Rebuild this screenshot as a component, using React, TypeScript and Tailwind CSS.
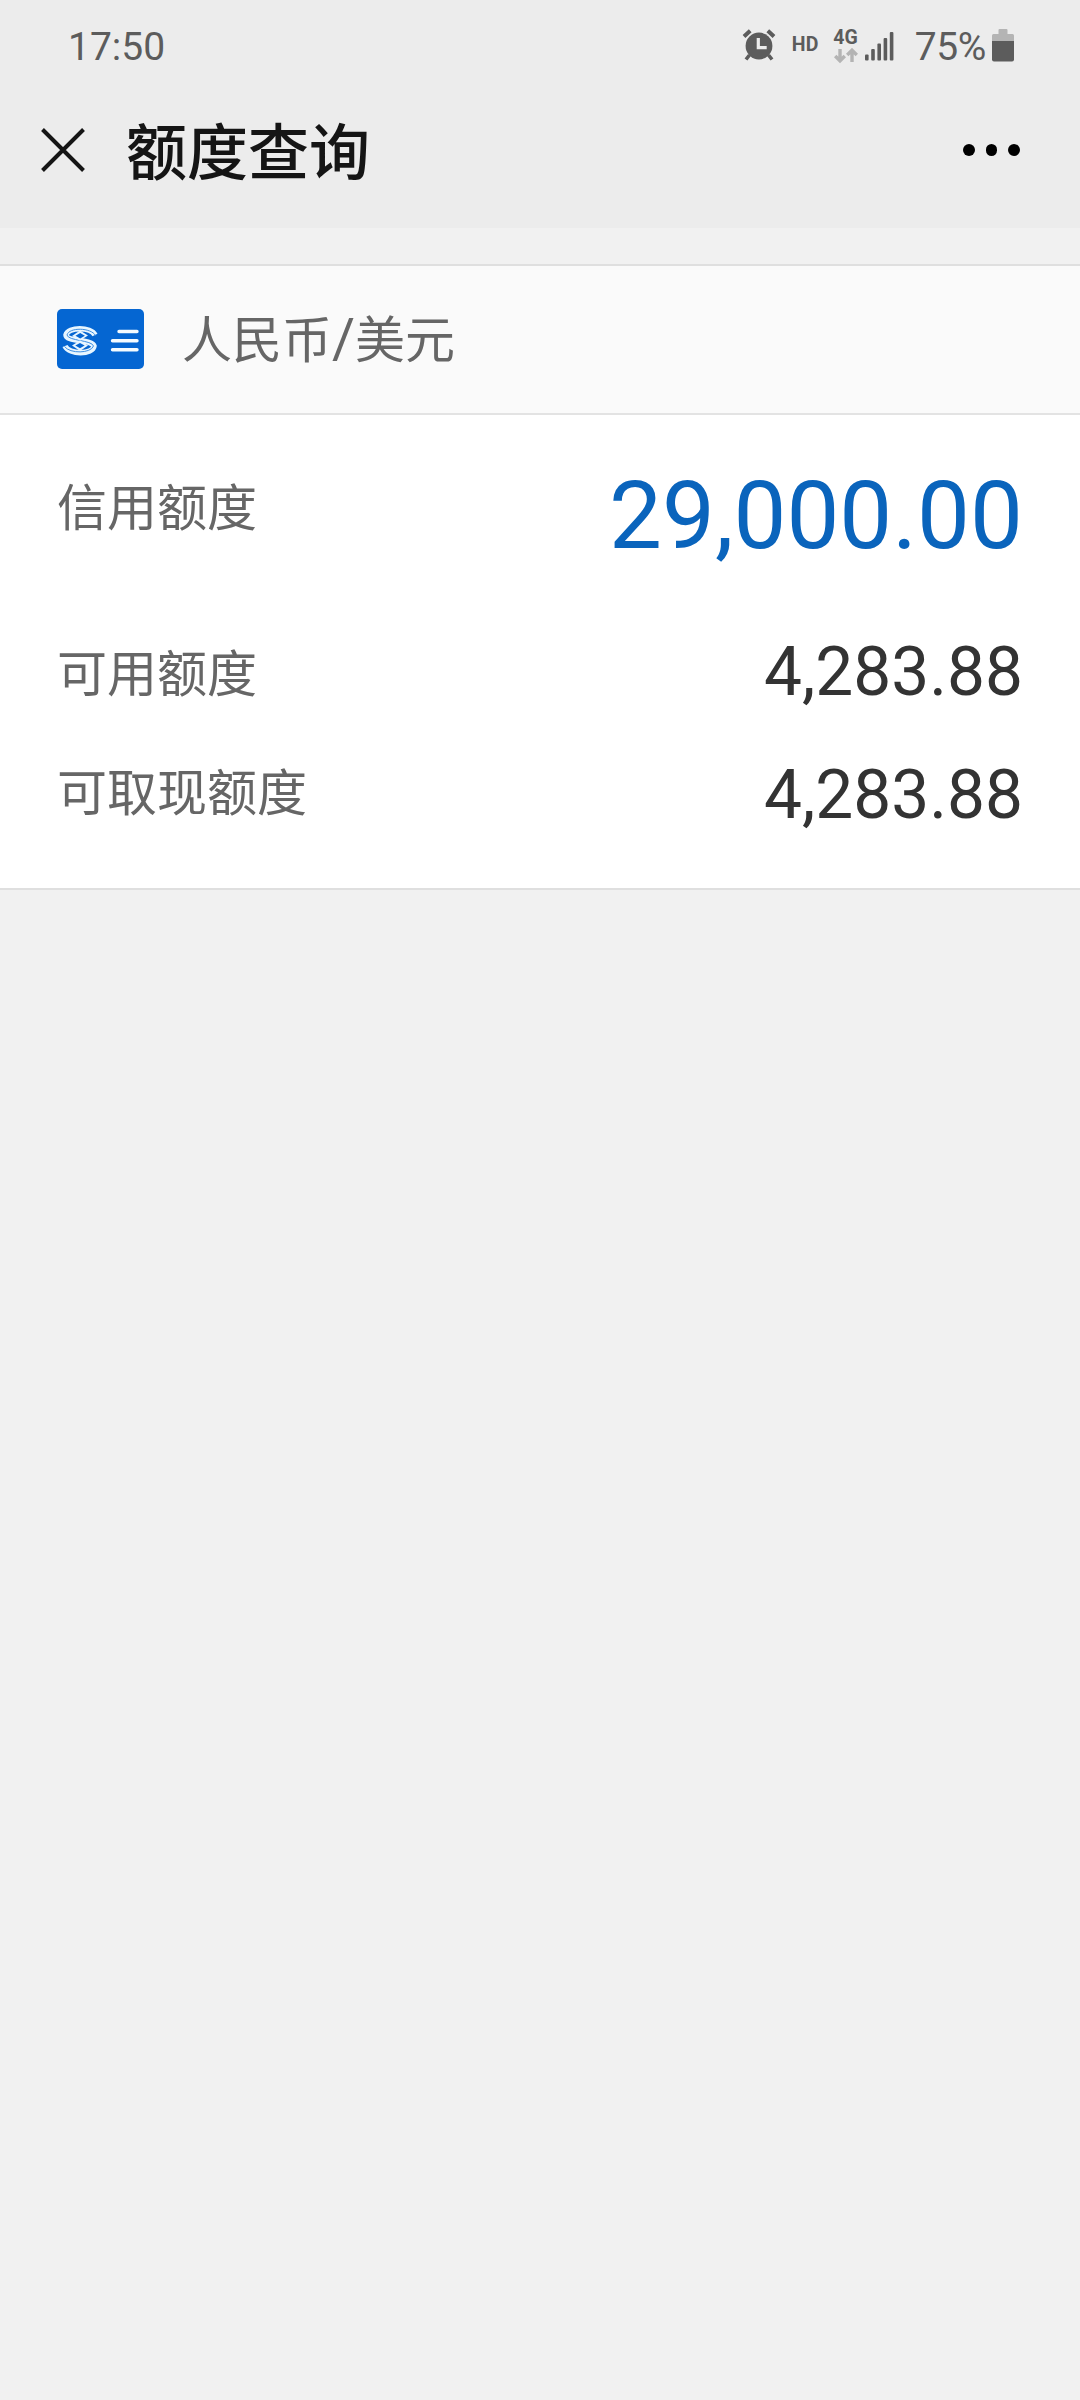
import React from 'react';

interface LimitRowProps {
  label: string;
  value: string;
  className: string;
  labelClassName: string;
  valueClassName: string;
}

const limits: LimitRowProps[] = [
  { label: '信用额度', value: '29,000.00', className: 'h-[197px]', labelClassName: 'pb-[9px]', valueClassName: 'text-[94.2px] text-[#0a64bc] pt-[6px]' },
  { label: '可用额度', value: '4,283.88', className: 'h-[123px]', labelClassName: 'pt-[2px]', valueClassName: 'text-[67.6px] text-[#333333] pb-[2px]' },
  { label: '可取现额度', value: '4,283.88', className: 'h-[123px]', labelClassName: 'pb-[5px]', valueClassName: 'text-[67.6px] text-[#333333] pb-[2px]' },
];

const AlarmIcon = () => (
  <svg className="w-[34px] h-[34px]" viewBox="0 0 34 34" fill="none">
    <circle cx="17" cy="18" r="13.4" fill="#5c5c5c" />
    <path d="M2 8.5L8.2 2.7M32 8.5l-6.2-5.8" stroke="#5c5c5c" strokeWidth="4" />
    <path d="M7.5 27L4 31.5M26.5 27l3.5 4.5" stroke="#5c5c5c" strokeWidth="3.6" />
    <path d="M16.3 10v9.7h8.4" stroke="#ececec" strokeWidth="3.2" />
  </svg>
);

const DataArrows = () => (
  <svg className="w-[24px] h-[16px]" viewBox="0 0 24 16" fill="none" stroke="#b4b4b4" strokeWidth="3.4">
    <path d="M6 1v11M1.2 8L6 12.8 10.8 8" />
    <path d="M18 14V3M13.2 7L18 2.2 22.8 7" />
  </svg>
);

const SignalIcon = () => (
  <svg className="w-[29px] h-[29px]" viewBox="0 0 29 29" fill="#5c5c5c">
    <rect x="0" y="22.5" width="3.6" height="6" rx="1" />
    <rect x="6.2" y="17" width="3.6" height="11.5" rx="1" />
    <rect x="12.4" y="11.5" width="3.6" height="17" rx="1" />
    <rect x="18.6" y="6" width="3.6" height="22.5" rx="1" />
    <rect x="24.8" y="0" width="3.6" height="28.5" rx="1" />
  </svg>
);

const BatteryIcon = () => (
  <svg className="w-[22px] h-[33px]" viewBox="0 0 22 33">
    <path d="M6.5 1q0-1 1-1h7q1 0 1 1v4h5q1.5 0 1.5 1.5V12H0V6.5Q0 5 1.5 5h5z" fill="#b4b4b4" />
    <path d="M0 12h22v18.5q0 2-2 2H2q-2 0-2-2z" fill="#5c5c5c" />
  </svg>
);

const CardIcon = () => (
  <svg className="w-[87px] h-[60px]" viewBox="0 0 87 60" fill="none">
    <rect width="87" height="60" rx="5" fill="#0566d2" />
    {/* bank mark: white ribbon S with a thin inner line and two diamonds */}
    <path d="M38 26C34 17.500 11 17.500 9 26 9 33 35 30 37 37 36 46 12 46 8 37" stroke="#e8f6ff" strokeWidth="5.500" />
    <path d="M38.500 26.500C34 18.500 12 18 10 26 11 32 35 31 36.500 37 34 44.500 13 45 7.500 37.500" stroke="#3d8ee2" strokeWidth="1" />
    <path d="M15 27L23 21.500l8 5L23 31.500zM15 36.500L23 31.500l8 5L23 42z" fill="#e8f6ff" />
    <path d="M18.500 26.700l4.700-2.700 4.700 2.700-4.700 2.700zM18.300 36.600l4.700-2.700 4.700 2.700-4.700 2.700z" fill="#0566d2" />
    <path d="M62 22.500h18M55.500 31.800H80M55.500 40.800H80" stroke="#f4fbff" strokeWidth="3.400" strokeLinecap="round" />
  </svg>
);

const LimitRow: React.FC<LimitRowProps> = ({ label, value, className, labelClassName, valueClassName }) => (
  <div className={`flex items-center justify-between px-[57px] ${className}`}>
    <span className={`text-[50px] leading-none text-[#666666] ${labelClassName}`}>{label}</span>
    <span className={`leading-none ${valueClassName}`}>{value}</span>
  </div>
);

const App: React.FC = () => {
  return (
    <div className="w-[1080px] h-[2400px] bg-[#f1f1f1] font-['Roboto','Noto_Sans_CJK_SC',sans-serif] overflow-hidden">
      <header className="h-[228px] bg-[#ececec]">
        <div className="h-[90px] flex items-center justify-between pl-[68px] pr-[66px] text-[#5c5c5c]">
          <span className="text-[39px] leading-none pt-[5px]">17:50</span>
          <div className="flex items-center">
            <AlarmIcon />
            <span className="ml-[16px] text-[19.5px] font-bold leading-none">HD</span>
            <div className="ml-[15px] flex flex-col items-center pt-[2px]">
              <span className="text-[19.5px] font-bold leading-none">4G</span>
              <DataArrows />
            </div>
            <div className="ml-[7px] pt-[2px]">
              <SignalIcon />
            </div>
            <span className="ml-[21px] mr-[6px] pt-[5px] text-[39px] leading-none tracking-[-0.4px]">75%</span>
            <BatteryIcon />
          </div>
        </div>
        <div className="h-[120px] flex items-center pl-[41px] pr-[60.5px]">
          <svg className="w-[44px] h-[44px]" viewBox="0 0 44 44" fill="none" stroke="#151515" strokeWidth="4">
            <path d="M1.5 1.5l41 41M42.5 1.5l-41 41" />
          </svg>
          <h1 className="ml-[41px] pt-[9px] text-[61px] font-medium leading-none text-[#151515]">额度查询</h1>
          <div className="ml-auto flex gap-[11px]">
            <i className="w-[11.5px] h-[11.5px] rounded-full bg-black" />
            <i className="w-[11.5px] h-[11.5px] rounded-full bg-black" />
            <i className="w-[11.5px] h-[11.5px] rounded-full bg-black" />
          </div>
        </div>
      </header>

      <main className="mt-[36px] border-y-2 border-[#dfdfdf] bg-white">
        <div className="h-[149px] flex items-center pl-[57px] pb-[2px] bg-[#fafafa] border-b-2 border-[#e3e3e3]">
          <CardIcon />
          <span className="ml-[38px] pt-[2px] flex items-baseline text-[50px] leading-none text-[#666666]">
            人民币<span className="text-[56px] leading-[50px]">/</span>美元
          </span>
        </div>
        <div className="h-[473px]">
          {limits.map(row => (
            <LimitRow key={row.label} {...row} />
          ))}
        </div>
      </main>
    </div>
  );
};

export default App;
